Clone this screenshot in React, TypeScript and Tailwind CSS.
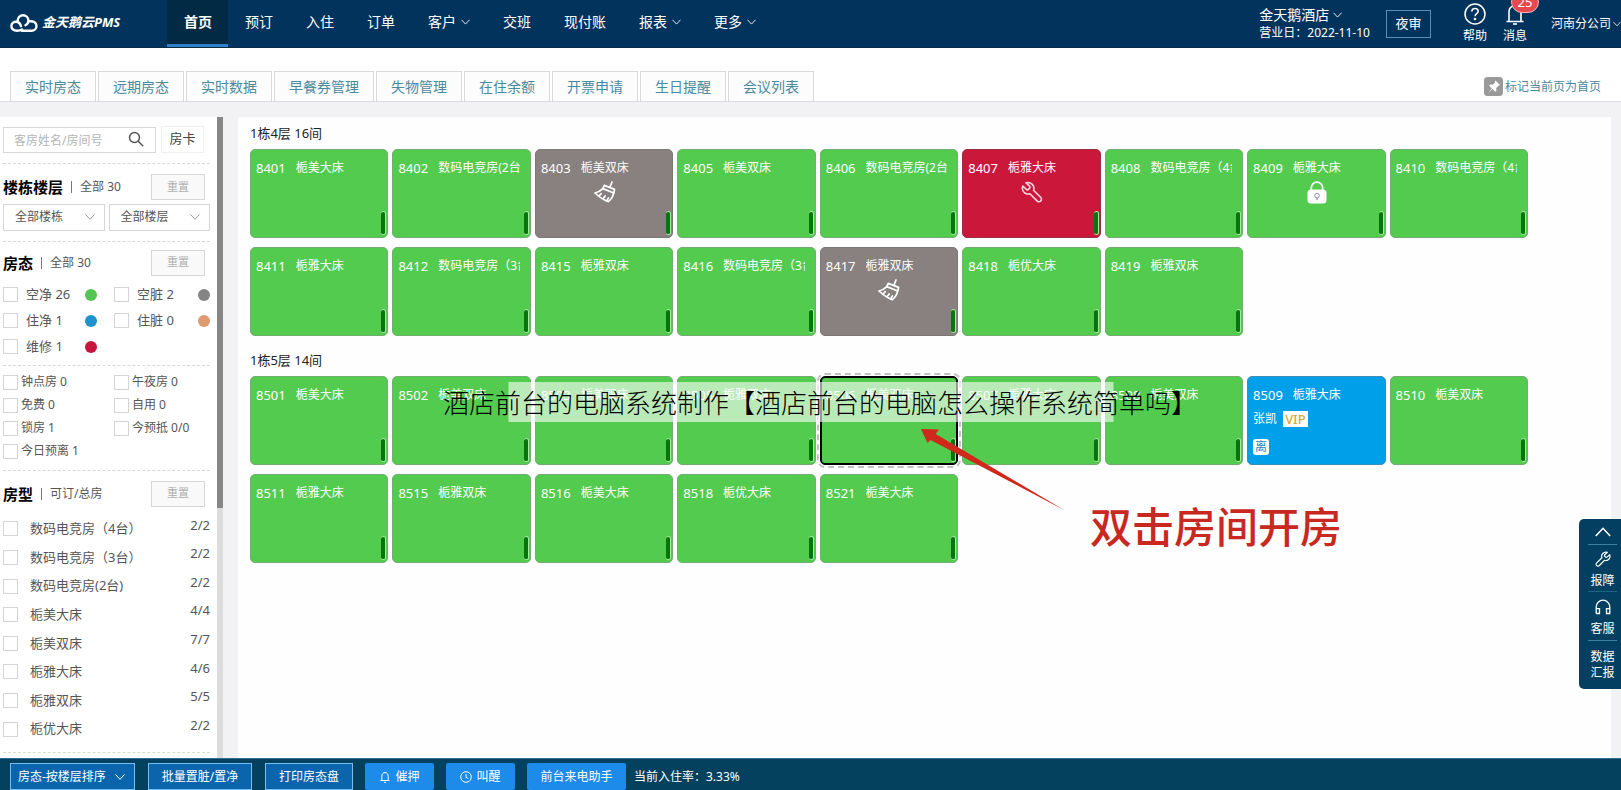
import React from 'react';

type Status = 'clean' | 'dirty' | 'repair' | 'occupied';
type Mark = 'broom' | 'wrench' | 'lock';

interface Room {
  no: string;
  type: string;
  status?: Status;
  mark?: Mark;
  selected?: boolean;
  guest?: string;
}

const NAV: { label: string; more?: boolean; active?: boolean }[] = [
  { label: '首页', active: true },
  { label: '预订' },
  { label: '入住' },
  { label: '订单' },
  { label: '客户', more: true },
  { label: '交班' },
  { label: '现付账' },
  { label: '报表', more: true },
  { label: '更多', more: true },
];

const TABS = ['实时房态', '远期房态', '实时数据', '早餐券管理', '失物管理', '在住余额', '开票申请', '生日提醒', '会议列表'];

const FLOORS: { title: string; rooms: Room[] }[] = [
  {
    title: '1栋4层 16间',
    rooms: [
      { no: '8401', type: '栀美大床' },
      { no: '8402', type: '数码电竞房(2台)' },
      { no: '8403', type: '栀美双床', status: 'dirty', mark: 'broom' },
      { no: '8405', type: '栀美双床' },
      { no: '8406', type: '数码电竞房(2台)' },
      { no: '8407', type: '栀雅大床', status: 'repair', mark: 'wrench' },
      { no: '8408', type: '数码电竞房（4台）' },
      { no: '8409', type: '栀雅大床', mark: 'lock' },
      { no: '8410', type: '数码电竞房（4台）' },
      { no: '8411', type: '栀雅大床' },
      { no: '8412', type: '数码电竞房（3台）' },
      { no: '8415', type: '栀雅双床' },
      { no: '8416', type: '数码电竞房（3台）' },
      { no: '8417', type: '栀雅双床', status: 'dirty', mark: 'broom' },
      { no: '8418', type: '栀优大床' },
      { no: '8419', type: '栀雅双床' },
    ],
  },
  {
    title: '1栋5层 14间',
    rooms: [
      { no: '8501', type: '栀美大床' },
      { no: '8502', type: '栀美双床' },
      { no: '8503', type: '栀美双床' },
      { no: '8505', type: '栀雅双床' },
      { no: '8506', type: '栀美双床', selected: true },
      { no: '8507', type: '栀雅大床' },
      { no: '8508', type: '栀美双床' },
      { no: '8509', type: '栀雅大床', status: 'occupied', guest: '张凯' },
      { no: '8510', type: '栀美双床' },
      { no: '8511', type: '栀雅大床' },
      { no: '8515', type: '栀雅双床' },
      { no: '8516', type: '栀美大床' },
      { no: '8518', type: '栀优大床' },
      { no: '8521', type: '栀美大床' },
    ],
  },
];

const STATES = [
  { label: '空净 26', dot: 'bg-[#55c552]' },
  { label: '空脏 2', dot: 'bg-[#848484]' },
  { label: '住净 1', dot: 'bg-[#1c93cf]' },
  { label: '住脏 0', dot: 'bg-[#e09a70]' },
  { label: '维修 1', dot: 'bg-[#c3173f]' },
];

const FLAGS = ['钟点房 0', '午夜房 0', '免费 0', '自用 0', '锁房 1', '今预抵 0/0', '今日预离 1'];

const TYPES: [string, string][] = [
  ['数码电竞房（4台）', '2/2'],
  ['数码电竞房（3台）', '2/2'],
  ['数码电竞房(2台)', '2/2'],
  ['栀美大床', '4/4'],
  ['栀美双床', '7/7'],
  ['栀雅大床', '4/6'],
  ['栀雅双床', '5/5'],
  ['栀优大床', '2/2'],
];

const CARD: Record<Status, string> = {
  clean: 'bg-[#53cb4f] border-[#74ad72]',
  dirty: 'bg-[#888180] border-[#7c7877]',
  repair: 'bg-[#cb173a] border-[#9c2f45]',
  occupied: 'bg-[#009fe9] border-[#3d8db5]',
};

const SELECTED =
  'bg-[#53cb4f] border-black ring-1 ring-black ring-inset outline-2 outline-offset-1 outline-dashed outline-[#c2c2c2]';

function Chevron({ className = '', up = false }: { className?: string; up?: boolean }) {
  return (
    <svg viewBox="0 0 10 6" className={className} fill="none" stroke="currentColor" strokeWidth="1" aria-hidden="true">
      <path d={up ? 'M.5 5.5 5 .7l4.5 4.8' : 'M.5.5 5 5.3 9.5.5'} />
    </svg>
  );
}

function Broom() {
  return (
    <svg viewBox="0 0 22 22" className="size-[22px]" fill="none" stroke="#fff" strokeWidth="1.7" strokeLinejoin="round" strokeLinecap="round" aria-hidden="true">
      <path d="M18 1 16 6" />
      <path d="m10.200 4.400 10.400 4-.8 3.600-11-4.400z" />
      <path d="M8.800 7.600C6.600 9.800 4 11.200 1 12c3.600 3.400 8.200 6.900 13.300 8.600 2.700-2.200 4.800-5 5.300-8.800" />
      <path d="m5.200 14.800 2-2.200M9.200 17.600l2-2.600M12.800 19.600l1.600-2.600" />
    </svg>
  );
}

function Wrench({ className = '', flip = false }: { className?: string; flip?: boolean }) {
  return (
    <svg viewBox="0 0 22 22" className={className} fill="none" stroke="currentColor" strokeWidth="1.6" strokeLinejoin="round" strokeLinecap="round" aria-hidden="true">
      <path
        transform={flip ? 'matrix(-1 0 0 1 22 0)' : undefined}
        d="M5 1.800 8.600 5.200c.6.6.6 1.400 0 2L7.400 8.400c-.6.6-1.400.6-2 0L1.800 5C.8 8.200 1.800 10.600 3.800 12c1.600 1.100 3.500 1.200 5.100.7l7.100 7.200c1.100 1.100 2.700 1.100 3.700.1 1-1 1-2.600-.1-3.700l-7.100-7c.7-2 .4-4.300-1.200-5.900C9.600 1.700 7.200 1.100 5 1.800Z"
      />
    </svg>
  );
}

function Lock() {
  return (
    <svg viewBox="0 0 20 23" className="h-[23px] w-5" fill="none" aria-hidden="true">
      <path d="M4.300 9.500V6.800a5.700 5.700 0 0 1 11.400 0v2.700" stroke="#fff" strokeWidth="1.800" />
      <rect x="0.500" y="8.500" width="19" height="14" rx="3.500" fill="#fff" />
      <circle cx="10" cy="14.600" r="2.300" stroke="#8d93c4" strokeWidth="1" />
      <path d="M10 17v2" stroke="#8d93c4" strokeWidth="1.200" />
    </svg>
  );
}

function RoomCard({ room }: { room: Room }) {
  const status = room.status ?? 'clean';
  return (
    <button
      type="button"
      className={`relative flex h-[89px] min-w-0 flex-col items-stretch rounded-[5px] border pt-[9px] pr-2.5 pl-[5px] text-left text-white ${
        room.selected ? SELECTED : CARD[status]
      }`}
    >
      <span className="flex h-[18px] w-full items-center gap-2.5 overflow-hidden leading-[18px] whitespace-nowrap">
        <span className="shrink-0 text-[13px]">{room.no}</span>
        <span className="min-w-0 overflow-hidden text-xs leading-[18px]">{room.type}</span>
      </span>
      {room.mark && (
        <span className="mt-1 -mr-1.5 flex justify-center">
          {room.mark === 'broom' && <Broom />}
          {room.mark === 'wrench' && <Wrench className="size-[22px] text-[#ffd9df]" />}
          {room.mark === 'lock' && <Lock />}
        </span>
      )}
      {room.guest ? (
        <>
          <span className="mt-[7px] flex items-center gap-1.5 text-xs leading-4">
            {room.guest}
            <span className="bg-white px-0.5 text-[13px] font-medium text-[#d9a63a]">VIP</span>
          </span>
          <span className="mt-3 flex size-4 items-center justify-center rounded-[3px] bg-white text-xs leading-4 text-[#2a86b8]">离</span>
        </>
      ) : (
        <span className="absolute right-px bottom-0.5 h-6 w-[5px] rounded-[3px] border border-l-0 border-[#a5e8a0] bg-[#07750c]" />
      )}
    </button>
  );
}

function Check({ children, className = '' }: { children: React.ReactNode; className?: string }) {
  return (
    <label className={`flex items-center ${className}`}>
      <input type="checkbox" className="size-[15px] shrink-0 appearance-none border border-[#d4d4d4] bg-white checked:bg-[#1c93cf]" />
      {children}
    </label>
  );
}

function SectionTitle({ title, note }: { title: string; note: string }) {
  return (
    <div className="flex h-[26px] items-center pr-[5px]">
      <h2 className="text-[15px] leading-5 font-bold text-black">{title}</h2>
      <span className="ml-2 h-3 w-px bg-[#777]" />
      <span className="ml-2 text-xs leading-5 text-[#555]">{note}</span>
      <button type="button" className="ml-auto h-[26px] w-[54px] border border-[#d6d6d6] bg-[#f9f9f9] text-[11px] text-[#b0b0b0]">
        重置
      </button>
    </div>
  );
}

function SideSelect({ label, value }: { label: string; value: string }) {
  return (
    <div className="relative flex-1">
      <select aria-label={label} className="h-[27px] w-full appearance-none border border-[#d6d6d6] bg-white pl-[11px] text-xs text-[#555]">
        <option>{value}</option>
      </select>
      <Chevron className="pointer-events-none absolute top-[11px] right-2.5 h-1.5 w-2.5 text-[#999]" />
    </div>
  );
}

function Sidebar() {
  return (
    <aside className="flex w-[223px] shrink-0 bg-white">
      <div className="flex min-w-0 flex-1 flex-col pr-[7px] pl-[3px]">
        <div className="flex items-center gap-[5px] border-b border-dashed border-[#d9d9d9] pt-2 pr-1.5 pb-2.5">
          <div className="relative flex-1">
            <input
              aria-label="客房姓名/房间号"
              placeholder="客房姓名/房间号"
              className="mt-0.5 h-[26px] w-full border border-[#d6d6d6] bg-white pr-8 pl-2.5 text-xs text-[#555] placeholder:text-[#b5b5b5]"
            />
            <svg viewBox="0 0 16 16" className="pointer-events-none absolute top-[6px] right-3 size-4" fill="none" stroke="#555" strokeWidth="1.500" aria-hidden="true">
              <circle cx="6.500" cy="6.500" r="5" />
              <path d="m10.200 10.200 5 5" />
            </svg>
          </div>
          <button type="button" className="h-[27px] w-[43px] border border-[#efefef] text-[13px] text-[#444]">
            房卡
          </button>
        </div>

        <div className="border-b border-dashed border-[#d9d9d9] pt-2.5 pb-2.5">
          <SectionTitle title="楼栋楼层" note="全部 30" />
          <div className="mt-[3px] flex gap-1">
            <SideSelect label="楼栋" value="全部楼栋" />
            <SideSelect label="楼层" value="全部楼层" />
          </div>
        </div>

        <div className="border-b border-dashed border-[#d9d9d9] pt-2 pb-[5px]">
          <SectionTitle title="房态" note="全部 30" />
          <div className="mt-1.5 grid grid-cols-[111px_1fr]">
            {STATES.map((s, i) => (
              <div key={s.label} className={`flex h-[26px] items-center ${i % 2 ? '' : 'pr-[17px]'}`}>
                <Check className="flex-1 gap-2 text-[13px] text-[#555]">{s.label}</Check>
                <span className={`size-3 rounded-full ${s.dot}`} />
              </div>
            ))}
          </div>
        </div>

        <div className="grid grid-cols-[111px_1fr] border-b border-dashed border-[#d9d9d9] pt-[5px] pb-[7px]">
          {FLAGS.map((f) => (
            <Check key={f} className="h-[23px] gap-[3px] text-xs text-[#555]">
              {f}
            </Check>
          ))}
        </div>

        <div className="border-b border-dashed border-[#d9d9d9] pt-2.5 pb-2">
          <SectionTitle title="房型" note="可订/总房" />
          <div className="mt-2 flex h-[229px] flex-col">
            {TYPES.map(([name, count]) => (
              <div key={name} className="flex flex-1 justify-between text-[13px] text-[#555]">
                <Check className="gap-3">{name}</Check>
                <span className="leading-5">{count}</span>
              </div>
            ))}
          </div>
        </div>
      </div>
      <div className="w-1.5 shrink-0 bg-[#dcdcdc]">
        <div className="h-[61%] bg-[#868686]" />
      </div>
    </aside>
  );
}

function Header() {
  return (
    <header className="flex h-12 shrink-0 items-stretch overflow-hidden border-b border-[#0c2c45] bg-[#02335c] text-white">
      <div className="flex w-[167px] shrink-0 items-center pb-0.5 pl-2.5">
        <svg viewBox="0 0 28 18" className="h-[18px] w-7" fill="none" stroke="#fff" strokeWidth="2.400" strokeLinecap="round" aria-hidden="true">
          <path d="M12 15.500c-1.200.8-3 1.200-5 1.200C3.800 16.700 1.400 15 1.400 12.200S3.600 7.800 6 7.800c3 0 4.400 2.400 5 4.400" />
          <path d="M7.600 7C7.800 3.600 10 1.300 13 1.300s5.400 2.200 5.400 5.300c0 2.300-1.200 3.800-3 4.700" />
          <path d="M18.800 7.400c4.300-.8 7.700 1 7.700 4.600 0 3-2.200 4.700-5 4.700H12" />
        </svg>
        <span className="ml-1 text-[13px] font-bold whitespace-nowrap italic">金天鹅云PMS</span>
      </div>
      <nav className="flex">
        {NAV.map((n) => (
          <a
            key={n.label}
            href="#"
            className={`flex items-center gap-[5px] border-b-[3px] pr-4 pl-[17px] text-sm whitespace-nowrap ${
              n.active ? 'border-[#2f7fc9] bg-[#032a45] font-bold' : 'border-transparent'
            }`}
          >
            {n.label}
            {n.more && <Chevron className="h-1.5 w-[9px]" />}
          </a>
        ))}
      </nav>
      <div className="ml-auto flex items-center">
        <div className="text-xs leading-[18px] whitespace-nowrap">
          <button type="button" className="flex items-center gap-1 text-sm leading-[18px]">
            金天鹅酒店
            <Chevron className="h-1.5 w-[9px]" />
          </button>
          <div>营业日：2022-11-10</div>
        </div>
        <button type="button" className="ml-4 h-7 w-[45px] border border-[#5d8db8] text-[13px]">
          夜审
        </button>
        <button type="button" className="ml-8 flex flex-col items-center gap-[3px] text-xs leading-4">
          <svg viewBox="0 0 22 22" className="size-[22px]" fill="none" stroke="#fff" strokeWidth="1.500" aria-hidden="true">
            <circle cx="11" cy="11" r="10" />
            <path d="M7.800 8.600c0-2 1.400-3.200 3.200-3.200s3.200 1.200 3.200 2.900c0 2.200-3.200 2.500-3.200 4.900" />
            <circle cx="11" cy="16" r="0.600" fill="#fff" />
          </svg>
          帮助
        </button>
        <button type="button" className="relative ml-4 flex flex-col items-center gap-[3px] text-xs leading-4">
          <svg viewBox="0 0 20 22" className="h-[22px] w-5" fill="none" stroke="#fff" strokeWidth="1.600" aria-hidden="true">
            <path d="M1.500 18.500h17M4 18.500V9c0-3.800 2.500-6 6-6s6 2.200 6 6v9.500" />
            <path d="M8 21h4" />
          </svg>
          消息
          <span className="absolute -top-3 left-2 flex h-[22px] w-7 items-center justify-center rounded-full border border-[#f3b6b8] bg-[#e5484d] text-[13px]">25</span>
        </button>
        <button type="button" className="ml-6 flex items-center gap-0.5 text-xs whitespace-nowrap">
          河南分公司
          <Chevron className="h-1.5 w-2" />
        </button>
      </div>
    </header>
  );
}

function BottomBar() {
  const outline = 'h-[27px] border border-[#79bdf0] bg-[#0a65ad] text-xs text-white';
  const solid = 'flex h-[27px] items-center justify-center gap-1 rounded-[2px] bg-[#1d8bea] text-xs text-white';
  return (
    <footer className="flex h-8 shrink-0 items-end border-t border-[#2f6e90] bg-[#04415f] pl-2.5 whitespace-nowrap">
      <div className="relative">
        <select aria-label="房态排序" className={`${outline} w-[125px] appearance-none pl-[7px]`}>
          <option>房态-按楼层排序</option>
        </select>
        <Chevron className="pointer-events-none absolute top-[11px] right-2.5 h-1.5 w-2.5 text-white" />
      </div>
      <button type="button" className={`${outline} ml-[13px] w-[104px]`}>批量置脏/置净</button>
      <button type="button" className={`${outline} ml-[13px] w-[88px]`}>打印房态盘</button>
      <button type="button" className={`${solid} ml-3 w-[69px]`}>
        <svg viewBox="0 0 12 12" className="size-3" fill="none" stroke="#fff" aria-hidden="true">
          <path d="M1.500 9.500h9M2.800 9.500V5.500C2.800 3.200 4 1.500 6 1.500s3.200 1.700 3.200 4v4M5 11.300h2" />
        </svg>
        催押
      </button>
      <button type="button" className={`${solid} ml-3 w-[69px]`}>
        <svg viewBox="0 0 12 12" className="size-3" fill="none" stroke="#fff" aria-hidden="true">
          <circle cx="6" cy="6" r="5.300" />
          <path d="M6 3v3.300l2.200 1.200" />
        </svg>
        叫醒
      </button>
      <button type="button" className={`${solid} ml-3 w-[99px]`}>前台来电助手</button>
      <span className="ml-2 text-xs leading-[27px] text-white">当前入住率：3.33%</span>
    </footer>
  );
}

function SideTools() {
  return (
    <div className="absolute right-0 bottom-[101px] flex w-[42px] flex-col items-stretch rounded-l-[5px] bg-[#023f60] pr-1 pl-[9px] text-xs leading-4 text-white">
      <button type="button" aria-label="返回顶部" className="flex h-[26px] items-center justify-center border-b border-[#3c7f9e]">
        <Chevron up className="h-2.5 w-4" />
      </button>
      <button type="button" className="flex h-[47px] flex-col items-center gap-1.5 border-b border-[#24607f] pt-1.5 whitespace-nowrap">
        <Wrench flip className="size-4" />
        报障
      </button>
      <button type="button" className="flex h-[49px] flex-col items-center gap-1.5 border-b border-[#3c7f9e] pt-[7px] whitespace-nowrap">
        <svg viewBox="0 0 16 16" className="size-4" fill="none" stroke="#fff" strokeWidth="1.300" aria-hidden="true">
          <path d="M1.200 14.500V8a6.800 6.800 0 0 1 13.600 0v6.500h-3.300V9.600h3.300M1.200 9.600h3.300v4.900H1.200" />
        </svg>
        客服
      </button>
      <button type="button" className="h-12 pb-px whitespace-nowrap">
        数据
        <br />
        汇报
      </button>
    </div>
  );
}

export default function App() {
  return (
    <div className="relative flex h-screen flex-col overflow-hidden bg-[#f2f2f5] font-['Noto_Sans','Noto_Sans_CJK_SC',sans-serif] text-[#333]">
      <Header />
      <div className="flex h-[54px] shrink-0 items-end border-b border-[#dcdce0] bg-white pl-2.5">
        <div className="flex gap-0.5">
          {TABS.map((t) => (
            <a key={t} href="#" className="h-[30px] border border-b-0 border-[#d9d9dc] bg-[#fcfcfc] px-3.5 text-sm leading-[30px] whitespace-nowrap text-[#4a8a9e]">
              {t}
            </a>
          ))}
        </div>
        <a href="#" className="mr-5 mb-[5px] ml-auto flex items-center gap-0.5 text-xs text-[#4a8a9e]">
          <svg viewBox="0 0 19 19" className="size-[19px]" aria-hidden="true">
            <rect width="19" height="19" rx="3.500" fill="#999" />
            <path d="m11.200 3.200 4.800 4.800-1.500.7-2.300 2.300.2 2.700-1.200 1-2.600-2.600-4.200 3.600 3.500-4.300L5.200 8.700l1-1.200 2.700.3 2.100-2.300z" fill="#fff" />
          </svg>
          标记当前页为首页
        </a>
      </div>

      <div className="flex min-h-0 flex-1 pt-[15px]">
        <Sidebar />
        <main className="mr-2.5 ml-[15px] min-w-0 flex-1 bg-[#fefefe] pt-0.5 pr-[83px] pl-3">
          {FLOORS.map((f) => (
            <section key={f.title} className="mb-2.5">
              <h3 className="h-[30px] text-[13px] leading-7 text-[#222]">{f.title}</h3>
              <div className="grid grid-cols-9 gap-x-1 gap-y-[9px]">
                {f.rooms.map((r) => (
                  <RoomCard key={r.no} room={r} />
                ))}
              </div>
            </section>
          ))}
        </main>
      </div>

      <BottomBar />
      <SideTools />

      <div className="pointer-events-none absolute top-[382px] left-1/2 h-10 w-[605px] -translate-x-1/2 bg-white/60">
        <p className="absolute top-0 -left-[65px] font-['Noto_Sans_CJK_SC',sans-serif] text-[26px] leading-10 font-light whitespace-nowrap text-black">
          酒店前台的电脑系统制作【酒店前台的电脑怎么操作系统简单吗】
        </p>
      </div>
      <svg viewBox="0 0 144 82" className="pointer-events-none absolute top-[429px] left-[921px] h-[82px] w-36" aria-hidden="true">
        <path d="M0 0 18 .5l-3.300 4.500L144 81.500 9.500 11 6.500 14z" fill="#d0281a" />
      </svg>
      <p className="pointer-events-none absolute top-[502px] left-[1090px] text-[42px] leading-[50px] font-medium whitespace-nowrap text-[#c8281f]">
        双击房间开房
      </p>
    </div>
  );
}
